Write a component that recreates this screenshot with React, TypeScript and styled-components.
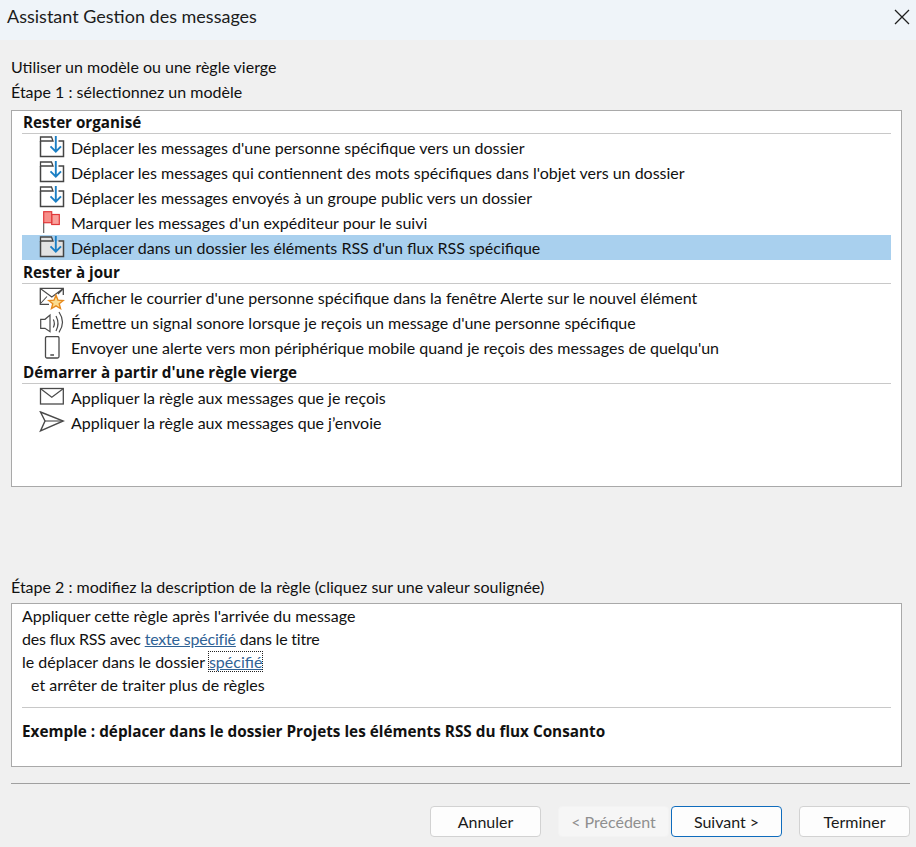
import styled, { createGlobalStyle } from "styled-components";

const GlobalStyle = createGlobalStyle`
  html, body {
    margin: 0;
    padding: 0;
    background: #f0f0f0;
  }
  body {
    font-family: "Lato", "Open Sans", "Liberation Sans", sans-serif;
    color: #111;
  }
`;

function MoveIcon({ shaded }: { shaded?: boolean }) {
  const fill = shaded ? "#e2e2e2" : "#fff";
  return (
    <svg width="26" height="25" viewBox="0 0 26 25" fill="none">
      <path d="M1.5 5V20.5H24.5V5H19.5" stroke="#444" strokeWidth="1.5" fill={fill} />
      <path d="M1.5 5V1H12.5L14 5Z" stroke="#444" strokeWidth="1.3" fill={fill} />
      <path d="M16.8 0V15.5M11.5 10.3L16.8 15.7L22 10.3" stroke="#1b7fc4" strokeWidth="1.9" />
    </svg>
  );
}

function FlagIcon() {
  return (
    <svg width="26" height="25" viewBox="0 0 26 25" fill="none">
      <path d="M4.7 11V22" stroke="#555" strokeWidth="1.1" />
      <rect x="12.7" y="3.5" width="7.6" height="10" fill="#f9a09b" stroke="#e0393b" strokeWidth="1.2" />
      <rect x="4.7" y="0.7" width="8" height="11" fill="#f78f8a" stroke="#e0393b" strokeWidth="1.2" />
    </svg>
  );
}

function AlertIcon() {
  return (
    <svg width="26" height="25" viewBox="0 0 26 25" fill="none">
      <path d="M10 18.3H1.3V2.3H24.3V9" stroke="#4a4a4a" strokeWidth="1.3" />
      <path d="M2 3L12.8 11L23.5 3M1.5 17.5L8 10.5M24 3L19 8" stroke="#4a4a4a" strokeWidth="1.1" />
      <path
        d="M17 9.2L19 14.2L24.2 14.5L20.2 17.8L21.5 22.6L17 19.9L12.5 22.6L13.8 17.8L9.8 14.5L15 14.2Z"
        fill="#fbdc8e"
        stroke="#e68a1e"
        strokeWidth="1.4"
      />
    </svg>
  );
}

function SoundIcon() {
  return (
    <svg width="26" height="25" viewBox="0 0 26 25" fill="none">
      <path d="M1.7 8.3H6L11 4V20.7L6 17.3H1.7Z" stroke="#4a4a4a" strokeWidth="1.2" fill="#fff" />
      <path d="M14.3 8.5C15.5 10.8 15.5 14.2 14.3 16.5" stroke="#4a4a4a" strokeWidth="1.2" />
      <path d="M17 5C19.4 9.5 19.4 15.5 17 20" stroke="#4a4a4a" strokeWidth="1.2" />
      <path d="M20 1C24.4 7.5 24.4 15 20 21.3" stroke="#4a4a4a" strokeWidth="1.2" />
    </svg>
  );
}

function PhoneIcon() {
  return (
    <svg width="26" height="25" viewBox="0 0 26 25" fill="none">
      <rect x="6.5" y="0.5" width="13.5" height="21.5" rx="1.5" stroke="#4a4a4a" strokeWidth="1.3" fill="#fff" />
      <path d="M11.3 19H15" stroke="#4a4a4a" strokeWidth="1.5" />
    </svg>
  );
}

function MailIcon() {
  return (
    <svg width="26" height="25" viewBox="0 0 26 25" fill="none">
      <rect x="1.5" y="2.5" width="22.8" height="15.5" stroke="#4a4a4a" strokeWidth="1.3" fill="#fff" />
      <path d="M2 3L12.8 11.3L23.8 3" stroke="#4a4a4a" strokeWidth="1.2" />
    </svg>
  );
}

function SendIcon() {
  return (
    <svg width="26" height="25" viewBox="0 0 26 25" fill="none">
      <path d="M1.5 1L24.3 10L1.5 20L6 10Z" stroke="#4a4a4a" strokeWidth="1.4" fill="#fff" />
      <path d="M6 10H24" stroke="#4a4a4a" strokeWidth="1.1" />
    </svg>
  );
}

const sections = [
  {
    title: "Rester organisé",
    rows: [
      { icon: <MoveIcon />, label: "Déplacer les messages d'une personne spécifique vers un dossier" },
      { icon: <MoveIcon />, label: "Déplacer les messages qui contiennent des mots spécifiques dans l'objet vers un dossier" },
      { icon: <MoveIcon />, label: "Déplacer les messages envoyés à un groupe public vers un dossier" },
      { icon: <FlagIcon />, label: "Marquer les messages d'un expéditeur pour le suivi" },
      { icon: <MoveIcon shaded />, label: "Déplacer dans un dossier les éléments RSS d'un flux RSS spécifique", selected: true },
    ],
  },
  {
    title: "Rester à jour",
    rows: [
      { icon: <AlertIcon />, label: "Afficher le courrier d'une personne spécifique dans la fenêtre Alerte sur le nouvel élément" },
      { icon: <SoundIcon />, label: "Émettre un signal sonore lorsque je reçois un message d'une personne spécifique" },
      { icon: <PhoneIcon />, label: "Envoyer une alerte vers mon périphérique mobile quand je reçois des messages de quelqu'un" },
    ],
  },
  {
    title: "Démarrer à partir d'une règle vierge",
    rows: [
      { icon: <MailIcon />, label: "Appliquer la règle aux messages que je reçois" },
      { icon: <SendIcon />, label: "Appliquer la règle aux messages que j’envoie" },
    ],
  },
];

export default function App() {
  return (
    <Dialog>
      <GlobalStyle />
      <TitleBar>
        <Title>Assistant Gestion des messages</Title>
        <CloseButton aria-label="Fermer">
          <svg width="16" height="16" viewBox="0 0 16 16" fill="none">
            <path d="M1 1L15 15M15 1L1 15" stroke="#1f1f1f" strokeWidth="1.3" />
          </svg>
        </CloseButton>
      </TitleBar>
      <Body>
        <Label>Utiliser un modèle ou une règle vierge</Label>
        <Label>Étape 1 : sélectionnez un modèle</Label>
        <TemplateBox>
          {sections.map((section) => (
            <div key={section.title}>
              <SectionTitle>{section.title}</SectionTitle>
              {section.rows.map((row) => (
                <Row key={row.label} $selected={row.selected}>
                  <IconSlot>{row.icon}</IconSlot>
                  <RowLabel>{row.label}</RowLabel>
                </Row>
              ))}
            </div>
          ))}
        </TemplateBox>
        <StepTwoLabel>Étape 2 : modifiez la description de la règle (cliquez sur une valeur soulignée)</StepTwoLabel>
        <DescriptionBox>
          <Line>Appliquer cette règle après l'arrivée du message</Line>
          <TightLine>
            des flux RSS avec <RuleLink>texte spécifié</RuleLink> dans le titre
          </TightLine>
          <Line>
            le déplacer dans le dossier <FocusedLink>spécifié</FocusedLink>
          </Line>
          <IndentedLine>et arrêter de traiter plus de règles</IndentedLine>
          <Divider />
          <Example>Exemple : déplacer dans le dossier Projets les éléments RSS du flux Consanto</Example>
        </DescriptionBox>
      </Body>
      <Footer>
        <Button>Annuler</Button>
        <NavGroup>
          <Button disabled>&lt; Précédent</Button>
          <Button $primary>Suivant &gt;</Button>
        </NavGroup>
        <Button>Terminer</Button>
      </Footer>
    </Dialog>
  );
}

const Dialog = styled.div`
  width: 916px;
  height: 847px;
  display: flex;
  flex-direction: column;
  overflow: hidden;
  background-color: #f0f0f0;
  font-size: 16px;
`;

const TitleBar = styled.div`
  height: 40px;
  flex-shrink: 0;
  padding: 0 6px 6px 7px;
  box-sizing: border-box;
  display: flex;
  align-items: center;
  justify-content: space-between;
  background-color: #eff4f9;
`;

const Title = styled.div`
  font-size: 18px;
  line-height: 22px;
  margin-bottom: 2px;
  color: #1c1c1c;
`;

const CloseButton = styled.button`
  width: 16px;
  height: 16px;
  padding: 0;
  display: flex;
  align-items: center;
  justify-content: center;
  background: none;
  border: none;
`;

const Body = styled.div`
  flex: 1;
  padding: 15px 14px 0 11px;
  display: flex;
  flex-direction: column;
`;

const Label = styled.div`
  height: 25px;
  line-height: 23px;
`;

const TemplateBox = styled.div`
  height: 377px;
  box-sizing: border-box;
  margin-top: 5px;
  padding: 0 10px;
  background-color: #fff;
  border: 1px solid #a9a9a9;
`;

const SectionTitle = styled.div`
  height: 23px;
  line-height: 23px;
  margin-bottom: 2px;
  border-bottom: 1px solid #c8c8c8;
  box-sizing: border-box;
  font-family: "Open Sans", "Lato", sans-serif;
  font-size: 15.2px;
  font-weight: 700;
  padding-left: 1px;
`;

const Row = styled.div<{ $selected?: boolean }>`
  height: 25px;
  box-sizing: border-box;
  display: flex;
  align-items: center;
  white-space: nowrap;
  background-color: ${(props) => (props.$selected ? "#a9d0ee" : "transparent")};
  margin: ${(props) => (props.$selected ? "-1px 0 1px" : "0")};
  padding-top: ${(props) => (props.$selected ? "1px" : "0")};
`;

const IconSlot = styled.span`
  width: 49px;
  height: 25px;
  padding-left: 17px;
  box-sizing: border-box;
  display: flex;
  align-items: center;
  flex-shrink: 0;
`;

const RowLabel = styled.span`
  padding-bottom: 2px;
`;

const StepTwoLabel = styled(Label)`
  margin-top: 88px;
`;

const DescriptionBox = styled.div`
  height: 164px;
  box-sizing: border-box;
  margin-top: 3px;
  padding: 0 10px;
  background-color: #fff;
  border: 1px solid #a9a9a9;
`;

const Line = styled.div`
  height: 23px;
  line-height: 23px;
  white-space: nowrap;
`;

const TightLine = styled(Line)`
  letter-spacing: -0.2px;
`;

const IndentedLine = styled(Line)`
  padding-left: 9px;
`;

const RuleLink = styled.a`
  color: #2f6295;
  text-decoration: underline;
`;

const FocusedLink = styled(RuleLink)`
  outline: 1px dotted #222;
`;

const Divider = styled.div`
  margin-top: 11px;
  border-top: 1px solid #c8c8c8;
`;

const Example = styled.div`
  margin-top: 12px;
  line-height: 23px;
  font-family: "Open Sans", "Lato", sans-serif;
  font-size: 15.3px;
  font-weight: 700;
`;

const Footer = styled.div`
  height: 64px;
  margin: 0 6px 0 11px;
  padding: 22px 0 0 419px;
  box-sizing: border-box;
  display: flex;
  align-items: flex-start;
  justify-content: space-between;
  border-top: 1px solid #a0a0a0;
`;

const NavGroup = styled.div`
  display: flex;
  gap: 2px;
`;

const Button = styled.button<{ $primary?: boolean }>`
  width: 111px;
  height: 31px;
  box-sizing: border-box;
  padding: 0;
  font-family: inherit;
  font-size: 16px;
  color: #1a1a1a;
  background-color: #fdfdfd;
  border: 1px solid ${(props) => (props.$primary ? "#0f6cbd" : "#d2d2d2")};
  border-radius: 4px;

  &:disabled {
    color: #8f8f8f;
    background-color: #f6f6f6;
    border-color: #f3f3f3;
  }
`;
